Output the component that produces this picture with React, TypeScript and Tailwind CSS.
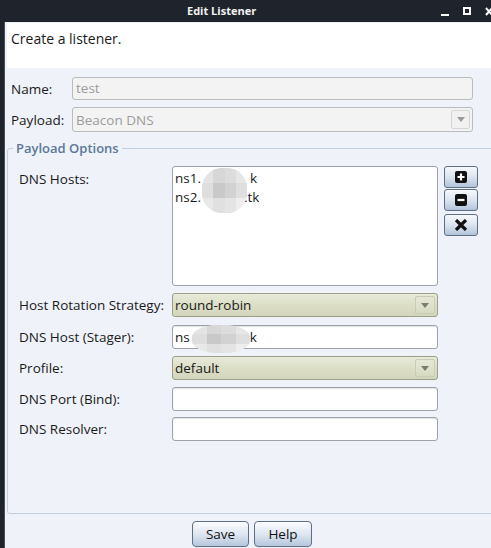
import React from "react";

const font = { fontFamily: '"Open Sans", "Noto Sans", "DejaVu Sans", sans-serif' };

function Field({ children, className = "" }: { children?: React.ReactNode; className?: string }) {
  return (
    <div
      className={`relative h-[24px] w-[266px] rounded-[3px] border border-[#9ca3ad] bg-white pl-[2px] text-[13.5px] leading-[22px] text-[#1a1a1a] shadow-[inset_0_1px_1px_rgba(0,0,0,0.12)] ${className}`}
    >
      {children}
    </div>
  );
}

function Combo({ value }: { value: string }) {
  return (
    <div className="relative flex h-[24px] w-[266px] items-center rounded-[3px] border border-[#9aa088] bg-gradient-to-b from-[#e8eada] via-[#dcdfc6] to-[#d3d6bb] pl-[2px] text-[13.5px] leading-[20px] text-[#1a1a1a]">
      <span className="flex-1">{value}</span>
      <div className="mr-[2px] flex h-[18px] w-[20px] items-center justify-center rounded-[2px] border border-[#c9ccb4] bg-gradient-to-b from-[#e6e8d6] to-[#d8dbc2]">
        <svg width="8" height="5" viewBox="0 0 8 5">
          <path d="M0 0 L8 0 L4 5 Z" fill="#7a7d70" />
        </svg>
      </div>
    </div>
  );
}

function Blob({ className }: { className: string }) {
  return (
    <div className={`absolute overflow-hidden rounded-[45%] bg-[#e2e2e2] ${className}`}>
      <div className="grid h-full w-full grid-cols-4 grid-rows-3">
        <div className="bg-[#e4e4e4]" />
        <div className="bg-[#d7d7d7]" />
        <div className="bg-[#dcdcdc]" />
        <div className="bg-[#e6e6e6]" />
        <div className="bg-[#dedede]" />
        <div className="bg-[#c9c9c9]" />
        <div className="bg-[#d2d2d2]" />
        <div className="bg-[#dfdfdf]" />
        <div className="bg-[#e8e8e8]" />
        <div className="bg-[#e0e0e0]" />
        <div className="bg-[#e4e4e4]" />
        <div className="bg-[#eeeeee]" />
      </div>
    </div>
  );
}

function SideBtn({ children }: { children: React.ReactNode }) {
  return (
    <div className="flex h-[22px] w-[34px] items-center justify-center rounded-[3px] border border-[#5e6f85] bg-gradient-to-b from-[#f7f9fc] via-[#dbe4ef] to-[#b3c4da]">
      {children}
    </div>
  );
}

function NimbusBtn({ label, w }: { label: string; w: string }) {
  return (
    <div
      className={`flex h-[26px] ${w} items-center justify-center rounded-[4px] border border-[#5e6f85] bg-gradient-to-b from-[#fbfcfe] via-[#dfe7f1] to-[#b5c6dc] text-[13.5px] text-[#111]`}
    >
      {label}
    </div>
  );
}

const label = "w-[153px] text-[13.5px] leading-[20px] text-[#1a1a1a]";

export default function App() {
  return (
    <div className="flex h-[548px] w-[491px] flex-col overflow-hidden bg-[#1f232b]" style={font}>
      {/* title bar */}
      <div className="relative flex h-[22px] shrink-0 items-center pl-[187px]">
        <span className="text-[11px] font-bold text-[#f2f2f2]">Edit Listener</span>
        <div className="absolute right-0 top-0 flex h-[22px] items-center">
          <div className="mr-[14px] mt-[7px] h-[2px] w-[8px] bg-white" />
          <div className="mr-[14px] h-[8px] w-[8px] border-2 border-white" />
          <svg width="6" height="9" viewBox="0 0 6 9">
            <path d="M1 1 L7 8 M7 1 L1 8" stroke="white" strokeWidth="2" />
          </svg>
        </div>
      </div>

      {/* window body */}
      <div className="ml-[4px] flex w-[500px] flex-1 flex-col border-l border-[#4a4f58] bg-[#eff2f9]">
        <div className="mx-[2px] mt-[1px] h-[45px] bg-white pl-[4px] pt-[5px] text-[14px] text-[#1a1a1a]">
          Create a listener.
        </div>

        {/* Name */}
        <div className="mt-[9px] flex items-center">
          <span className="w-[67px] pl-[6px] text-[13.5px] leading-[20px] text-[#1a1a1a]">Name:</span>
          <div className="h-[23px] w-[401px] rounded-[3px] border border-[#b8bbbf] bg-[#f3f3f3] pl-[3px] text-[13.5px] leading-[21px] text-[#9c9c9c]">
            test
          </div>
        </div>

        {/* Payload */}
        <div className="mt-[7px] flex items-center">
          <span className="w-[67px] pl-[6px] text-[13.5px] leading-[20px] text-[#1a1a1a]">Payload:</span>
          <div className="flex h-[25px] w-[401px] items-center rounded-[3px] border border-[#b8bbbf] bg-[#f3f3f3] pl-[3px] text-[13.5px] leading-[20px] text-[#9c9c9c]">
            <span className="flex-1">Beacon DNS</span>
            <div className="mr-[2px] flex h-[19px] w-[19px] items-center justify-center rounded-[2px] border border-[#d4d6d9] bg-[#f1f1f1]">
              <svg width="8" height="5" viewBox="0 0 8 5">
                <path d="M0 0 L8 0 L4 5 Z" fill="#9a9a9a" />
              </svg>
            </div>
          </div>
        </div>

        {/* Payload options fieldset */}
        <div className="relative ml-[2px] mr-[4px] mt-[16px] h-[366px] rounded-[3px] border border-[#c4cfdd]">
          <span className="absolute left-[5px] top-[-11px] bg-[#eff2f9] px-[3px] text-[13px] font-semibold leading-[20px] text-[#5b7898]">
            Payload Options
          </span>

          <div className="flex flex-col pl-[11px] pt-[17px]">
            {/* DNS Hosts */}
            <div className="flex">
              <span className={`${label} pt-[3px]`}>DNS Hosts:</span>
              <div className="relative h-[120px] w-[266px] rounded-[3px] border border-[#9ca3ad] bg-white pl-[2px] pt-[2px] text-[13.5px] leading-[19px] text-[#1a1a1a]">
                <div>
                  ns1.<span className="inline-block w-[49px]" />k
                </div>
                <div>
                  ns2.<span className="inline-block w-[43px]" />.tk
                </div>
                <Blob className="left-[29px] top-[1px] h-[45px] w-[45px]" />
              </div>
              <div className="ml-[6px] flex flex-col gap-[1px]">
                <SideBtn>
                  <svg width="12" height="12" viewBox="0 0 12 12">
                    <rect x="0" y="0" width="12" height="12" rx="2" fill="#111" />
                    <path d="M6 2.5 V9.5 M2.5 6 H9.5" stroke="white" strokeWidth="2.2" />
                  </svg>
                </SideBtn>
                <SideBtn>
                  <svg width="12" height="12" viewBox="0 0 12 12">
                    <rect x="0" y="0" width="12" height="12" rx="2" fill="#111" />
                    <path d="M2.5 6 H9.5" stroke="white" strokeWidth="2.2" />
                  </svg>
                </SideBtn>
                <div className="mt-[2px]">
                  <SideBtn>
                    <svg width="14" height="12" viewBox="0 0 14 12">
                      <path d="M2 1 L12 11 M12 1 L2 11" stroke="#111" strokeWidth="3.2" />
                    </svg>
                  </SideBtn>
                </div>
              </div>
            </div>

            {/* Host Rotation Strategy */}
            <div className="mt-[7px] flex items-center">
              <span className={label}>Host Rotation Strategy:</span>
              <Combo value="round-robin" />
            </div>

            {/* DNS Host (Stager) */}
            <div className="mt-[8px] flex items-center">
              <span className={label}>DNS Host (Stager):</span>
              <Field>
                ns<span className="inline-block w-[60px]" />k
                <Blob className="left-[19px] top-[-1px] h-[28px] w-[58px]" />
              </Field>
            </div>

            {/* Profile */}
            <div className="mt-[7px] flex items-center">
              <span className={label}>Profile:</span>
              <Combo value="default" />
            </div>

            {/* DNS Port */}
            <div className="mt-[7px] flex items-center">
              <span className={label}>DNS Port (Bind):</span>
              <Field />
            </div>

            {/* DNS Resolver */}
            <div className="mt-[6px] flex items-center">
              <span className={label}>DNS Resolver:</span>
              <Field />
            </div>
          </div>
        </div>

        {/* Buttons */}
        <div className="ml-[187px] mt-[7px] flex gap-[5px]">
          <NimbusBtn label="Save" w="w-[57px]" />
          <NimbusBtn label="Help" w="w-[58px]" />
        </div>
      </div>
    </div>
  );
}
